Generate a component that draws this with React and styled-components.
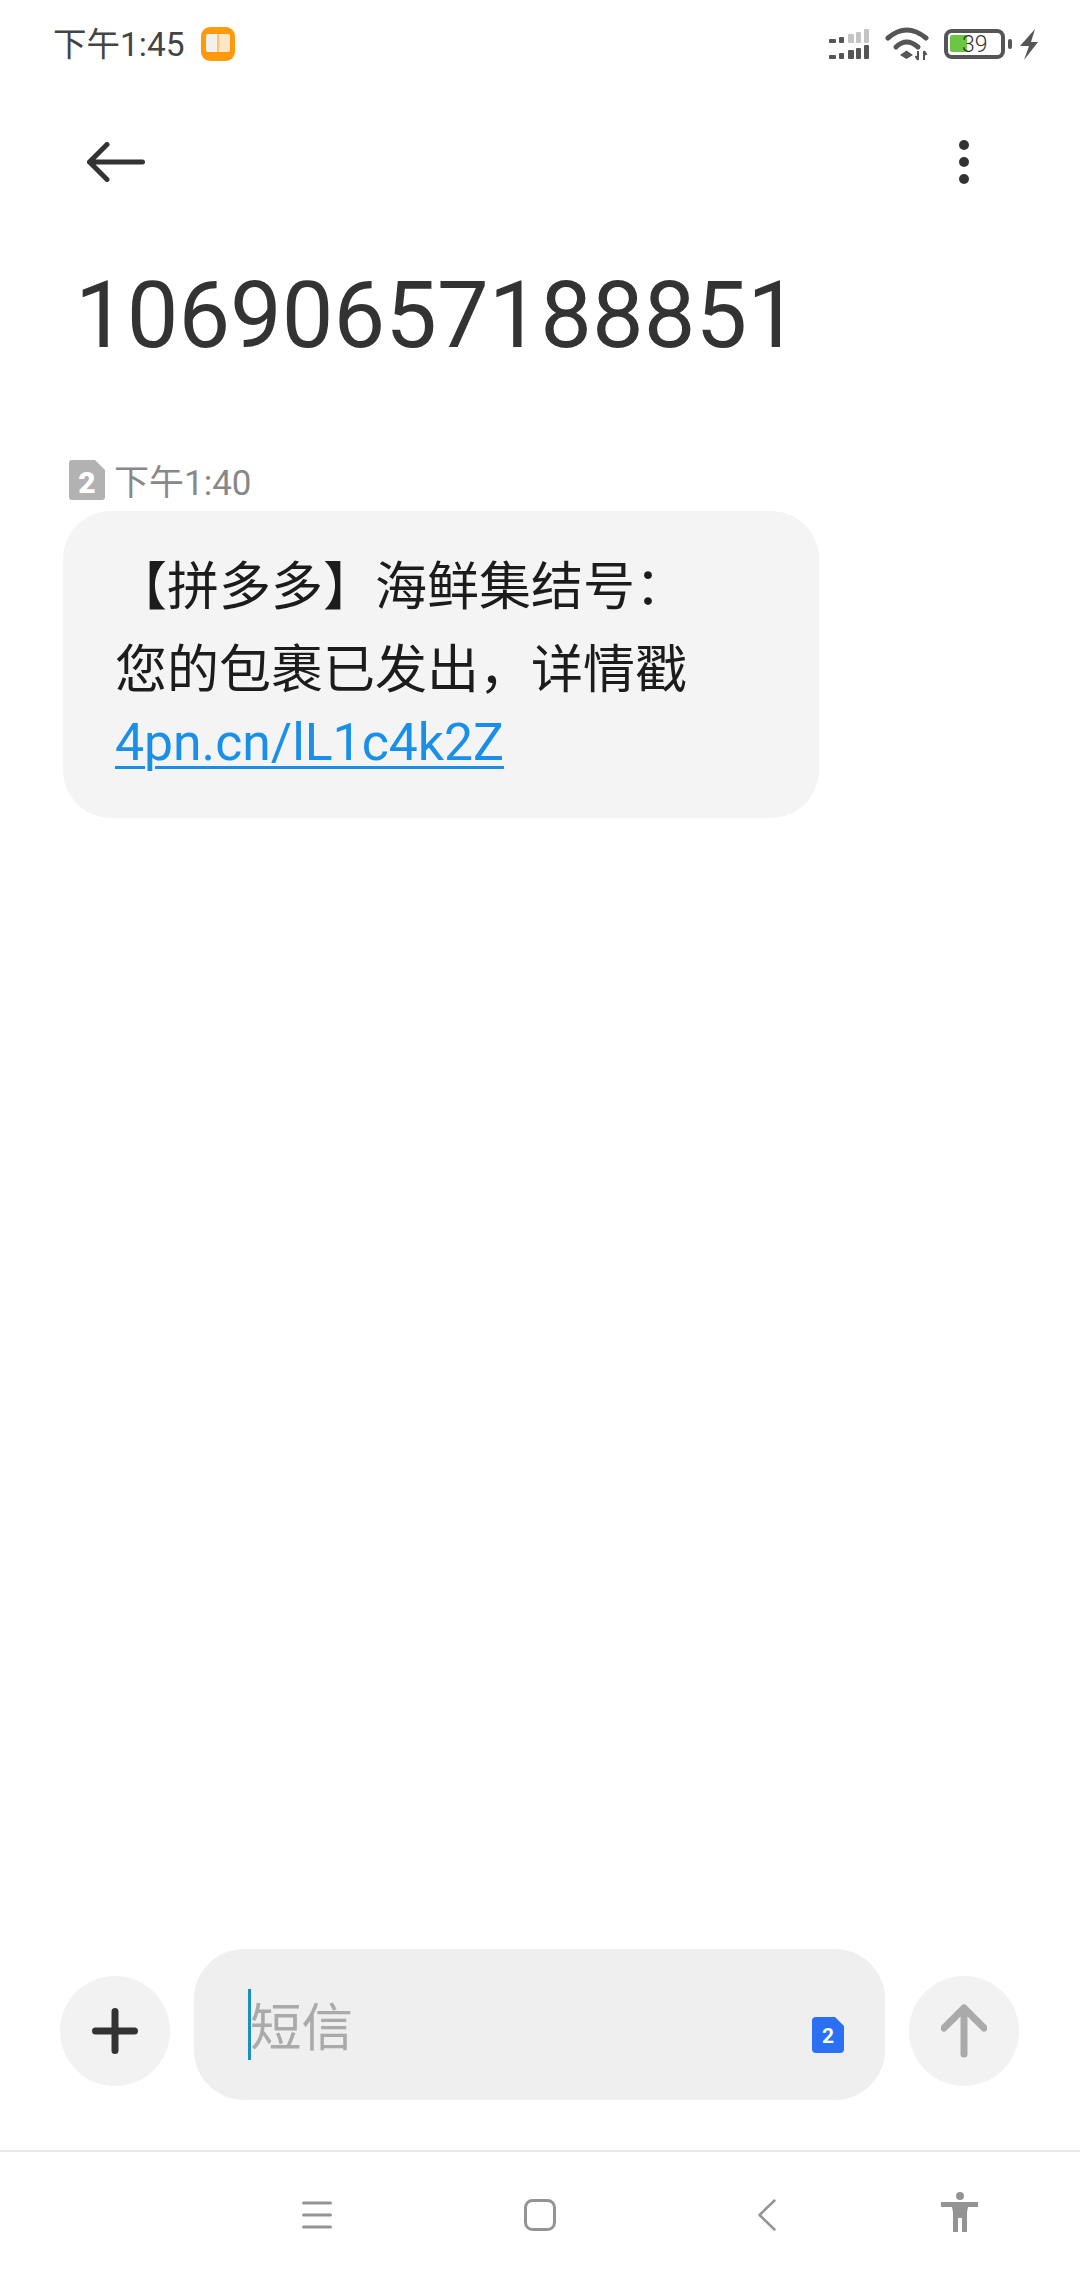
import React from "react"
import styled, { createGlobalStyle } from "styled-components"

const Reset = createGlobalStyle`
    html, body { margin: 0; padding: 0; background: #fff; }
    * { box-sizing: border-box; }
`
const Page = styled.div`
    width: 1080px;
    height: 2280px;
    display: flex;
    flex-direction: column;
    overflow: hidden;
    background: #fff;
    font-family: Roboto, "Noto Sans CJK SC", sans-serif;
`
const StatusBar = styled.div`
    height: 88px;
    padding: 0 41px 0 53px;
    display: flex;
    align-items: center;
    color: #444;
    font-size: 33.5px;
`
const Clock = styled.span`
    margin-right: 16px;
    margin-bottom: 5px;
`
const StatusRight = styled.div`
    margin-left: auto;
    display: flex;
    align-items: center;
`
const Wifi = styled.svg`
    margin-left: 16px;
`
const Battery = styled.div`
    width: 61px;
    height: 30px;
    margin-left: 13px;
    border: 4px solid #555;
    border-radius: 8px;
    display: flex;
    align-items: center;
    position: relative;
    font-size: 23px;
    font-weight: 300;
    color: #333;
    padding-left: 14px;
    span { position: relative; }
    &::before {
        content: "";
        position: absolute;
        left: 2px;
        top: 2px;
        width: 17px;
        height: 17px;
        border-radius: 2px;
        background: #6cc644;
    }
    &::after {
        content: "";
        position: absolute;
        right: -11px;
        top: 6px;
        width: 4px;
        height: 10px;
        border-radius: 2px;
        background: #555;
    }
`
const Bolt = styled.svg`
    margin-left: 15px;
`
const Toolbar = styled.div`
    height: 100px;
    margin-top: 24px;
    padding: 0 110px 0 87px;
    display: flex;
    align-items: center;
    justify-content: space-between;
`
const Title = styled.h1`
    margin: 54px 0 0;
    padding-left: 75px;
    height: 97px;
    font-size: 92px;
    line-height: 100px;
    font-weight: 400;
    color: #333;
`
const Thread = styled.div`
    flex: 1;
    padding: 97px 0 0 63px;
`
const Meta = styled.div`
    height: 40px;
    margin-bottom: 11px;
    padding-left: 6px;
    display: flex;
    align-items: center;
    gap: 9px;
    font-size: 35px;
    color: #888;
`
const MetaTime = styled.span`
    margin-bottom: 2px;
`
const Bubble = styled.div`
    width: 756px;
    padding: 30px 120px 39px 52px;
    border-radius: 48px;
    background: #f4f4f4;
    font-family: "Noto Sans CJK SC", sans-serif;
    font-size: 52px;
    line-height: 83px;
    color: #1c1c1c;
`
const MessageLink = styled.a`
    display: block;
    font-family: Roboto, sans-serif;
    font-size: 51.7px;
    line-height: 72px;
    color: #1a8fe8;
    text-decoration: underline;
    text-decoration-thickness: 3px;
    text-underline-offset: 6px;
`
const Composer = styled.div`
    padding: 0 61px 50px 60px;
    display: flex;
    align-items: flex-end;
    gap: 24px;
`
const RoundButton = styled.div`
    width: 110px;
    height: 110px;
    margin-bottom: 14px;
    flex: none;
    border-radius: 50%;
    background: #f2f2f2;
    display: flex;
    align-items: center;
    justify-content: center;
`
const InputBox = styled.div`
    flex: 1;
    height: 151px;
    padding: 0 41px 0 54px;
    border-radius: 50px;
    background: #efefef;
    display: flex;
    align-items: center;
`
const Caret = styled.div`
    width: 3px;
    height: 71px;
    background: #1b8fc4;
`
const Placeholder = styled.span`
    font-family: "Noto Sans CJK SC", sans-serif;
    font-size: 51.5px;
    color: #aaa;
    margin-top: -3px;
    margin-left: -1px;
`
const SimTag = styled.svg`
    margin-left: auto;
    margin-top: 21px;
`
const NavBar = styled.div`
    height: 130px;
    padding: 0 0 3px 206px;
    border-top: 2px solid #e8e8e8;
    display: grid;
    grid-template-columns: 222px 224px 230px 155px;
    align-items: center;
    justify-items: center;
`
const PersonIcon = styled.svg`
    margin-bottom: 5px;
`

function SignalIcon() {
    const bars = [[0, 7, 4, "#555"], [10, 5, 6, "#555"], [19, 6, 9, "#c4c4c4"], [27, 5, 11, "#c4c4c4"], [35, 5, 14, "#c4c4c4"]]
    return (
        <svg width="40" height="32" viewBox="0 0 40 32">
            {bars.map(([x, w, h, color], i) => (
                <rect key={i} x={x} y={15 - h} width={w} height={h} rx="1" fill={color} />
            ))}
            {bars.map(([x, w, h], i) => (
                <rect key={i} x={x} y={31 - h} width={w} height={h} rx="1" fill="#555" />
            ))}
        </svg>
    )
}

function WifiIcon() {
    return (
        <Wifi width="46" height="34" viewBox="0 0 46 34">
            <path d="M3 11 Q21.5 -5 41 11" fill="none" stroke="#555" strokeWidth="5" strokeLinecap="round" />
            <path d="M11 20 Q21.5 10 33 20" fill="none" stroke="#555" strokeWidth="5" strokeLinecap="round" />
            <path d="M21.5 23.5 L28 28 L21.5 32 L15 28 Z" fill="#555" />
            <path d="M33 24 V33 M30.5 29 L33 33 M39 33 V24 M39 24 L41.5 28" fill="none" stroke="#555" strokeWidth="2" />
        </Wifi>
    )
}

export default function App() {
    return (
        <Page>
            <Reset />
            <StatusBar>
                <Clock>下午1:45</Clock>
                <svg width="34" height="34" viewBox="0 0 34 34">
                    <rect width="34" height="34" rx="9" fill="#ff9a0d" />
                    <path d="M5 9 Q5 7 7 7 H16.5 V25 H7 Q5 25 5 23 Z" fill="#f3f1ee" />
                    <path d="M17.5 7 H27 Q29 7 29 9 V23 Q29 25 27 25 H17.5 Z" fill="#fde6c8" />
                </svg>
                <StatusRight>
                    <SignalIcon />
                    <WifiIcon />
                    <Battery><span>39</span></Battery>
                    <Bolt width="19" height="31" viewBox="0 0 19 31">
                        <path d="M15 0 L0 17 H9 L4 31 L18 13 H11 Z" fill="#555" />
                    </Bolt>
                </StatusRight>
            </StatusBar>
            <Toolbar>
                <svg width="58" height="40" viewBox="0 0 58 40">
                    <path d="M20 2.5 L2.5 20 L20 37.5 M2.5 20 H55.5" fill="none" stroke="#333" strokeWidth="5" strokeLinecap="round" strokeLinejoin="round" />
                </svg>
                <svg width="12" height="46" viewBox="0 0 12 46">
                    <circle cx="6" cy="6" r="5" fill="#333" />
                    <circle cx="6" cy="23" r="5" fill="#333" />
                    <circle cx="6" cy="40" r="5" fill="#333" />
                </svg>
            </Toolbar>
            <Title>10690657188851</Title>
            <Thread>
                <Meta>
                    <svg width="36" height="40" viewBox="0 0 36 40">
                        <path d="M3 0 H26 L36 10 V37 Q36 40 33 40 H3 Q0 40 0 37 V3 Q0 0 3 0 Z" fill="#b2b2b2" />
                        <text x="18" y="33" textAnchor="middle" fontFamily="Roboto, sans-serif" fontWeight="900" fontSize="30" fill="#fff">2</text>
                    </svg>
                    <MetaTime>下午1:40</MetaTime>
                </Meta>
                <Bubble>
                    【拼多多】海鲜集结号：您的包裹已发出，详情戳
                    <MessageLink>4pn.cn/lL1c4k2Z</MessageLink>
                </Bubble>
            </Thread>
            <Composer>
                <RoundButton>
                    <svg width="46" height="46" viewBox="0 0 46 46">
                        <path d="M23 3.5 V42.5 M3.5 23 H42.5" fill="none" stroke="#333" strokeWidth="7" strokeLinecap="round" />
                    </svg>
                </RoundButton>
                <InputBox>
                    <Caret />
                    <Placeholder>短信</Placeholder>
                    <SimTag width="32" height="36" viewBox="0 0 32 36">
                        <path d="M4 0 H23 L32 9 V32 Q32 36 28 36 H4 Q0 36 0 32 V4 Q0 0 4 0 Z" fill="#2b6ff2" />
                        <text x="16" y="26" textAnchor="middle" fontFamily="Roboto, sans-serif" fontWeight="700" fontSize="21" fill="#fff">2</text>
                    </SimTag>
                </InputBox>
                <RoundButton>
                    <svg width="46" height="54" viewBox="0 0 46 54">
                        <path d="M23 50 V4 M3 24 L23 4 L43 24" fill="none" stroke="#aaa" strokeWidth="7" strokeLinecap="round" strokeLinejoin="round" />
                    </svg>
                </RoundButton>
            </Composer>
            <NavBar>
                <svg width="30" height="28" viewBox="0 0 30 28">
                    <path d="M1.5 2 H28.5 M1.5 14 H28.5 M1.5 26 H28.5" stroke="#949494" strokeWidth="3" strokeLinecap="round" />
                </svg>
                <svg width="32" height="32" viewBox="0 0 32 32">
                    <rect x="1.5" y="1.5" width="29" height="29" rx="7" fill="none" stroke="#949494" strokeWidth="3" />
                </svg>
                <svg width="18" height="32" viewBox="0 0 18 32">
                    <path d="M16.5 1.5 L1.5 16 L16.5 30.5" fill="none" stroke="#949494" strokeWidth="2.5" strokeLinecap="round" strokeLinejoin="round" />
                </svg>
                <PersonIcon width="37" height="40" viewBox="0 0 37 40">
                    <circle cx="19" cy="4" r="4" fill="#949494" />
                    <path d="M0 10 H37 V15 H27 L26 20 V40 H21 V26 H17 V40 H12 V20 L11 15 H0 Z" fill="#949494" />
                </PersonIcon>
            </NavBar>
        </Page>
    )
}
